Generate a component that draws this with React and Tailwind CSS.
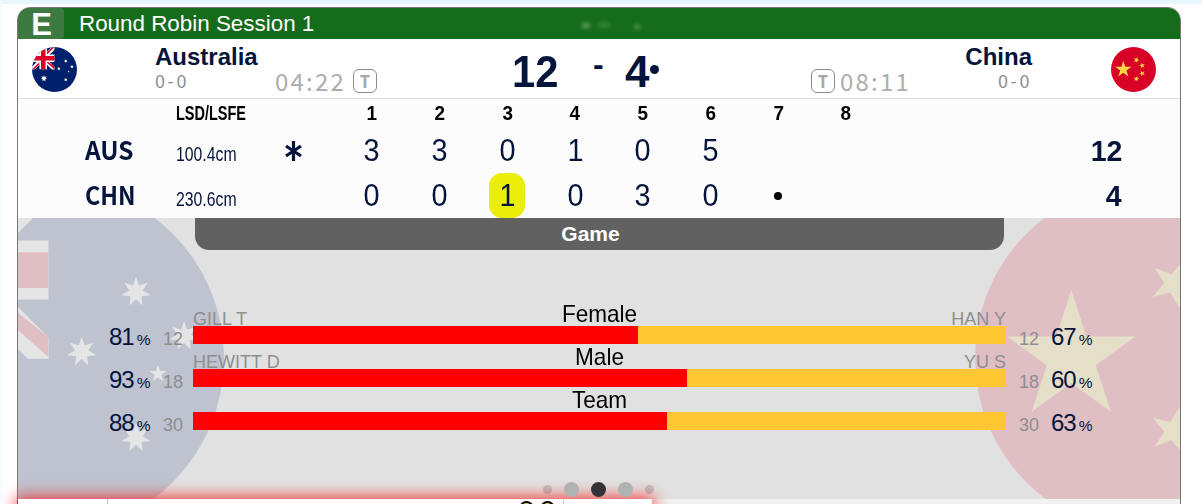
import clsx from 'clsx';

const ENDS = ['1', '2', '3', '4', '5', '6', '7', '8'];

const ROWS = [
  { code: 'AUS', draw: '100.4cm', hammer: true, ends: ['3', '3', '0', '1', '0', '5', '', ''], total: '12' },
  { code: 'CHN', draw: '230.6cm', hammer: false, ends: ['0', '0', '1', '0', '3', '0', 'dot', ''], total: '4', power: 2 },
];

const STATS = [
  { label: 'Female', home: 'GILL T', away: 'HAN Y', homePct: 81, awayPct: 67, shots: 12 },
  { label: 'Male', home: 'HEWITT D', away: 'YU S', homePct: 93, awayPct: 60, shots: 18 },
  { label: 'Team', home: '', away: '', homePct: 88, awayPct: 63, shots: 30 },
];

function starPoints(cx, cy, r, inner, count, turn = 0) {
  const pts = [];
  for (let i = 0; i < count * 2; i++) {
    const radius = i % 2 ? r * inner : r;
    const a = (Math.PI * i) / count - Math.PI / 2 + (turn * Math.PI) / 180;
    pts.push(`${(cx + radius * Math.cos(a)).toFixed(1)},${(cy + radius * Math.sin(a)).toFixed(1)}`);
  }
  return pts.join(' ');
}

function AustraliaFlag({ className }) {
  return (
    <svg viewBox="0 0 512 512" className={className}>
      <clipPath id="au-circle">
        <circle cx="256" cy="256" r="256" />
      </clipPath>
      <clipPath id="au-canton">
        <path d="M0 0h257v257H0z" />
      </clipPath>
      <g clipPath="url(#au-circle)">
        <path fill="#00206c" d="M0 0h512v512H0z" />
        <g clipPath="url(#au-canton)">
          <path stroke="#fff" strokeWidth="43" d="M-20-20l296 296M-20 276L276-20" />
          <path fill="#d80027" d="M171 157l86 69v29l-86-76zM85 171v24l-61 61H0zM171 85V61l61-61h24zM85 85L0 0h24l61 61z" />
          <path fill="#fff" d="M0 85h257v86H0zM85 0h86v256H85z" />
          <path fill="#d80027" d="M0 102h257v52H0zM102 0h52v256h-52z" />
        </g>
        <g fill="#fff">
          <polygon points={starPoints(136, 357, 38, 0.46, 7)} />
          <polygon points={starPoints(384, 160, 22, 0.46, 7)} />
          <polygon points={starPoints(305, 247, 22, 0.46, 7)} />
          <polygon points={starPoints(454, 224, 22, 0.46, 7)} />
          <polygon points={starPoints(384, 372, 22, 0.46, 7)} />
          <polygon points={starPoints(416, 279, 13, 0.4, 5)} />
        </g>
      </g>
    </svg>
  );
}

function ChinaFlag({ className }) {
  return (
    <svg viewBox="0 0 512 512" className={className}>
      <circle cx="256" cy="256" r="256" fill="#d80027" />
      <g fill="#ffda44">
        <polygon points={starPoints(140, 255, 98, 0.382, 5)} />
        <polygon points={starPoints(289, 148, 36, 0.382, 5, 22)} />
        <polygon points={starPoints(354, 211, 36, 0.382, 5, -10)} />
        <polygon points={starPoints(354, 301, 36, 0.382, 5, 46)} />
        <polygon points={starPoints(289, 362, 36, 0.382, 5, 14)} />
      </g>
    </svg>
  );
}

function TimeoutBadge() {
  return (
    <span className="flex size-6 items-center justify-center rounded-[6px] border border-[#8c8c8c] font-['Noto_Sans',sans-serif] text-[17px] leading-none font-bold text-[#a8a8a8]">
      T
    </span>
  );
}

function Clock({ children }) {
  return (
    <span className="font-['Noto_Sans_CJK_SC','Noto_Sans',sans-serif] text-[24px] leading-6 tracking-[2.2px] text-[#adadad]">
      {children}
    </span>
  );
}

function Record({ children }) {
  return (
    <div className="font-['Noto_Sans_CJK_SC','Noto_Sans',sans-serif] text-[18px] leading-[19px] tracking-[2.6px] text-[#8e8e8e]">
      {children}
    </div>
  );
}

function Header() {
  return (
    <header className="flex h-[31px] items-center bg-[#156c1b] text-white">
      <span className="flex h-[31px] w-[46px] items-center justify-center rounded-r-[4px] bg-[#3c7a41] pt-px pl-px text-[31px] leading-none font-bold">
        E
      </span>
      <span className="pl-[15px] text-[22.4px] leading-[30px]">Round Robin Session 1</span>
      <span className="mt-1 ml-[268px] flex gap-2 blur-[2px]">
        <span className="h-[5px] w-2 rounded-full bg-white/35" />
        <span className="h-1 w-3 rounded-full bg-white/20" />
        <span className="mt-0.5 ml-4 h-1 w-[6px] rounded-full bg-white/35" />
      </span>
    </header>
  );
}

function Scoreline() {
  return (
    <section className="flex h-[60px] border-b border-[#dedede] bg-white text-[#04143a]">
      <AustraliaFlag className="mt-2 ml-[14px] size-[45px]" />
      <div className="ml-[78px] w-[120px]">
        <div className="pt-1 text-[24px] leading-7 font-bold">Australia</div>
        <Record>0-0</Record>
      </div>
      <div className="mt-[30px] flex w-[102px] justify-between">
        <Clock>04:22</Clock>
        <TimeoutBadge />
      </div>
      <div className="flex w-[434px] pl-[135px] text-[44px] leading-[66px] font-bold">
        <span className="w-[81px]">
          <span className="inline-block origin-left scale-x-[.95]">12</span>
        </span>
        <span className="w-[32px] pt-[9px] text-[32px] leading-none">-</span>
        <span>4</span>
        <span className="mt-[26px] ml-px size-[9px] rounded-full bg-[#04143a]" />
      </div>
      <div className="mt-[30px] flex w-[105px] gap-[5px]">
        <TimeoutBadge />
        <Clock>08:11</Clock>
      </div>
      <div className="ml-[17px] w-[99px] text-right">
        <div className="pt-1 text-[24px] leading-7 font-bold">China</div>
        <Record>0-0</Record>
      </div>
      <ChinaFlag className="mt-2 ml-[79px] size-[45px]" />
    </section>
  );
}

function EndCell({ value, highlighted }) {
  if (value === 'dot') {
    return (
      <span className="flex items-center justify-center">
        <span className="size-2 rounded-full bg-black" />
      </span>
    );
  }
  return (
    <span className="flex justify-center">
      <span className={clsx('flex h-[45px] w-9 items-center justify-center rounded-[13px] pt-px', highlighted && 'bg-[#ebee08]')}>
        <span className="scale-x-[.93]">{value}</span>
      </span>
    </span>
  );
}

function ScoreTable() {
  return (
    <section className="h-[119px] bg-[#fcfcfc] text-[#04143a]">
      <div className="flex h-[29px] items-center pb-[2px] text-[21px] font-bold text-black">
        <span className="w-[320px] pl-[158px]">
          <span className="inline-block origin-left scale-x-[.69]">LSD/LSFE</span>
        </span>
        <div className="grid w-[542px] grid-cols-8 text-center">
          {ENDS.map((end) => (
            <span key={end} className="scale-x-90">{end}</span>
          ))}
        </div>
      </div>
      {ROWS.map((row) => (
        <div key={row.code} className="flex h-[45px] items-center">
          <span className="w-[158px] pb-[3px] pl-[67px] font-['Noto_Sans_CJK_SC','Noto_Sans',sans-serif] text-[26px] leading-[42px] font-bold">
            <span className={clsx('inline-block origin-left', row.code === 'AUS' ? 'scale-x-[.94]' : 'scale-x-[.9]')}>
              {row.code}
            </span>
          </span>
          <span className="w-[107px] pt-[6px] text-[20px]">
            <span className="inline-block origin-left scale-x-[.79]">{row.draw}</span>
          </span>
          <span className="w-[55px]">
            {row.hammer && (
              <svg viewBox="0 0 20 22" className="h-[22px] w-5 stroke-[#04143a] stroke-[3.2]">
                <path d="M10.5 1v20M3 6l15 10M18 6L3 16" />
              </svg>
            )}
          </span>
          <div className="grid w-[542px] grid-cols-8 text-[31px]">
            {row.ends.map((value, i) => (
              <EndCell key={i} value={value} highlighted={row.power === i} />
            ))}
          </div>
          <span className="w-[242px] text-right text-[30px] leading-[45px] font-bold">
            <span className="inline-block origin-right scale-x-[.95]">{row.total}</span>
          </span>
        </div>
      ))}
    </section>
  );
}

function Percent({ value }) {
  return (
    <span className="flex items-baseline gap-[3px] text-[24px] leading-6 tracking-[-1px] text-[#04143a]">
      {value}
      <span className="text-[15.5px] tracking-normal">%</span>
    </span>
  );
}

function StatRow({ stat }) {
  const share = (stat.homePct / (stat.homePct + stat.awayPct)) * 100;
  return (
    <div className="flex h-[43px] items-end pl-[91px]">
      <div className="-mb-2 flex w-[84px] items-baseline">
        <div className="w-[54px]">
          <Percent value={stat.homePct} />
        </div>
        <span className="text-[18px] leading-[18px] text-[#8e8e8e]">{stat.shots}</span>
      </div>
      <div className="w-[813px]">
        <div className="grid h-[25px] grid-cols-3 items-end text-[18px] leading-[13px] text-[#8e8e8e]">
          <span>{stat.home}</span>
          <span className="scale-x-[.94] text-center text-[24px] leading-6 text-black">{stat.label}</span>
          <span className="text-right">{stat.away}</span>
        </div>
        <div className="flex h-[18px] bg-[#ffc832]">
          <div className="bg-[#ff0000]" style={{ width: `${share}%` }} />
        </div>
      </div>
      <div className="-mb-2 flex items-baseline pl-[13px]">
        <span className="w-8 text-[18px] leading-[18px] text-[#8e8e8e]">{stat.shots}</span>
        <Percent value={stat.awayPct} />
      </div>
    </div>
  );
}

function GamePanel() {
  return (
    <section className="relative h-[281px] overflow-hidden bg-[#e1e1e1]">
      <AustraliaFlag className="absolute top-[-36px] left-[-146px] size-[352px] opacity-15" />
      <ChinaFlag className="absolute top-[-36px] left-[957px] size-[352px] opacity-15" />
      <div className="relative ml-[177px] flex h-8 w-[809px] items-center justify-center rounded-b-[14px] bg-[#616161] pr-[18px] text-[21px] font-bold text-white">
        Game
      </div>
      <div className="relative pt-[51px]">
        {STATS.map((stat) => (
          <StatRow key={stat.label} stat={stat} />
        ))}
      </div>
    </section>
  );
}

function Pager() {
  return (
    <div className="absolute top-[478px] left-[541px] flex items-center gap-3">
      <span className="size-[9px] rounded-full bg-black/15" />
      <span className="size-[15px] rounded-full bg-[#b0b2b2]" />
      <span className="size-[15px] rounded-full bg-[#353237]" />
      <span className="size-[15px] rounded-full bg-[#b0b2b2]" />
      <span className="size-[9px] rounded-full bg-black/15" />
    </div>
  );
}

export default function App() {
  return (
    <div className="relative h-[504px] w-[1202px] overflow-hidden border-t-4 border-l-2 border-t-[#e8f7fe] border-l-[#f5fcff] bg-white font-['Liberation_Sans',Arial,sans-serif]">
      <main className="mt-[3px] ml-[15px] h-[520px] w-[1164px] overflow-hidden rounded-t-[13px] border border-[#777] bg-[#f1f1f1]">
        <Header />
        <Scoreline />
        <ScoreTable />
        <GamePanel />
      </main>
      <div className="absolute top-[495px] left-4 flex h-10 w-[634px] bg-white shadow-[0_0_16px_2px_rgba(255,0,0,.75)]">
        <div className="w-[90px] border-r border-[#c5bcc5]" />
        <div className="flex w-[456px] justify-end gap-[6px] border-r border-[#d2d2d2] pt-[2px] pr-[8px]">
          <span className="size-[15px] rounded-full border-2 border-black bg-[#e8d65c]" />
          <span className="size-[15px] rounded-full border-2 border-black bg-[#e8d65c]" />
        </div>
      </div>
      <Pager />
    </div>
  );
}
